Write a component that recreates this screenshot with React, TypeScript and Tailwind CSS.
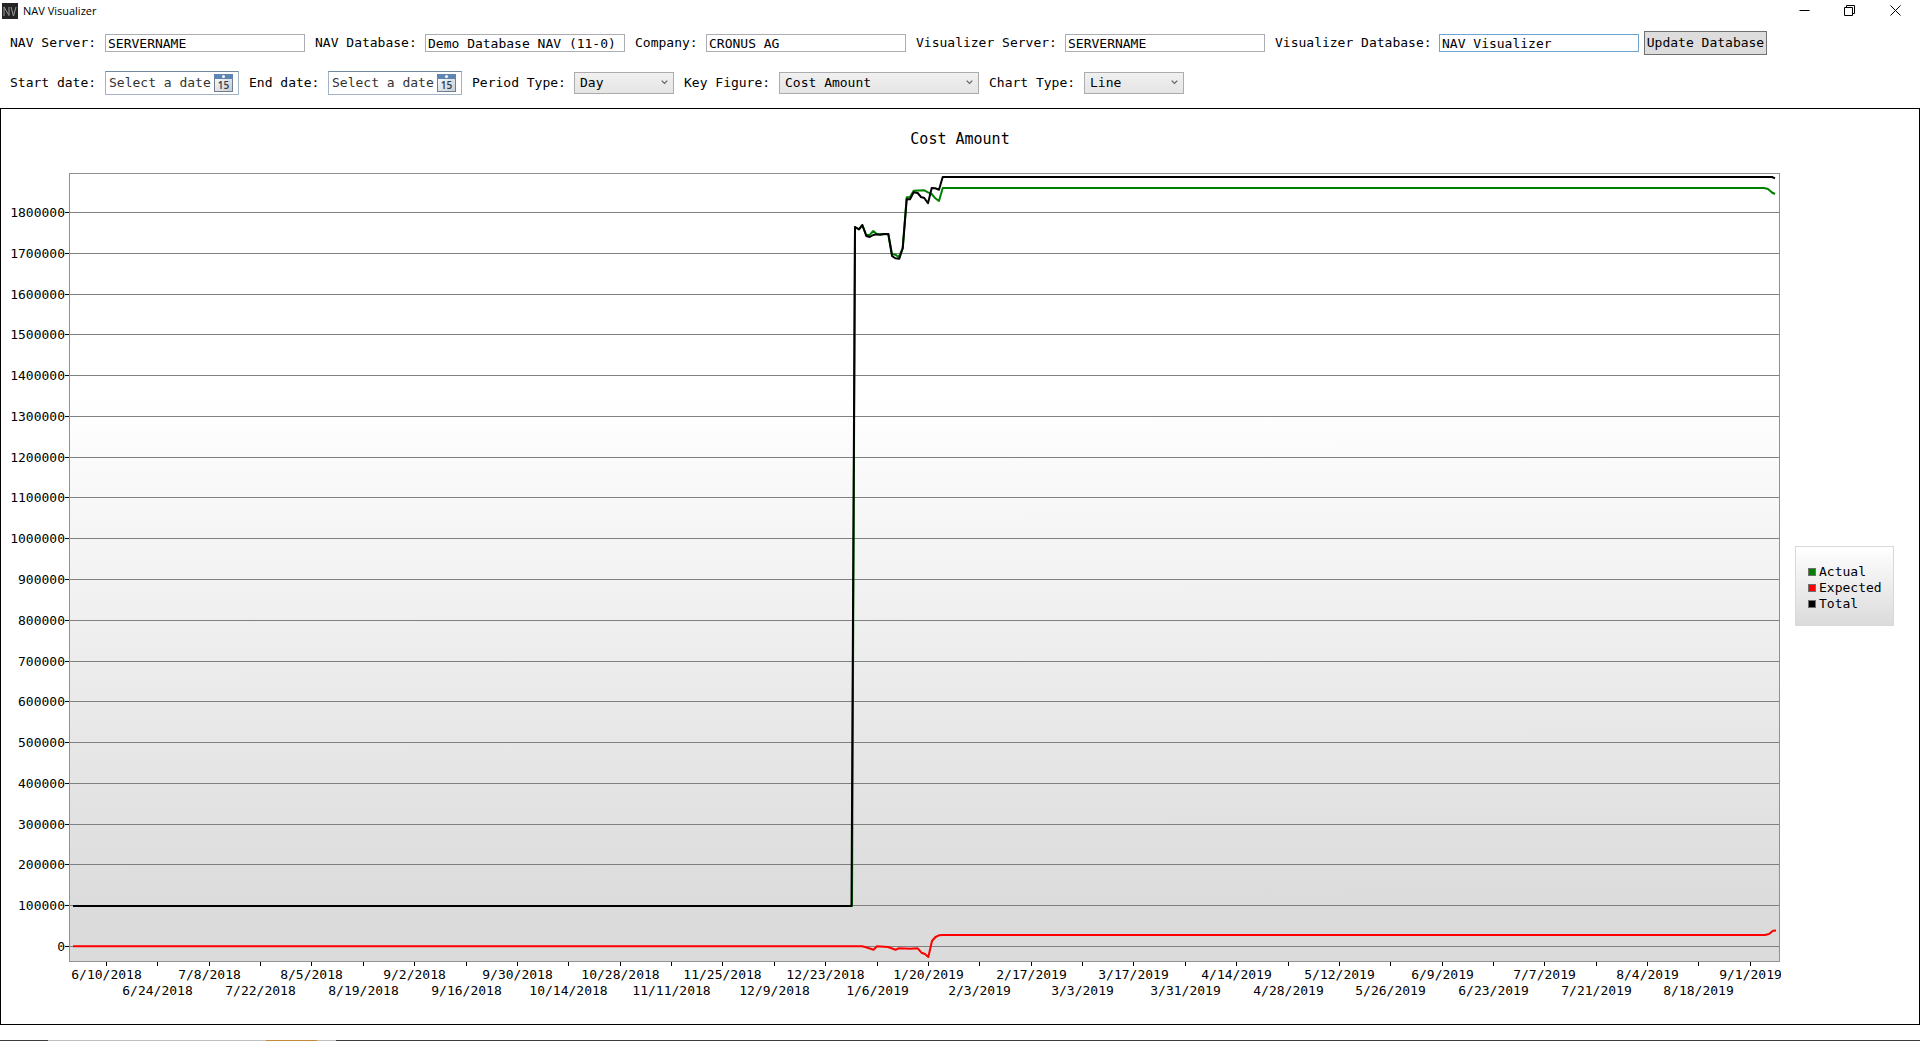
import React from "react";

type Point = [number, number];

const FIELDS = [
  { id: "nav-server", label: "NAV Server:", value: "SERVERNAME", labelWidth: "w-[95px]", border: "border-[#abadb3]" },
  { id: "nav-database", label: "NAV Database:", value: "Demo Database NAV (11-0)", labelWidth: "w-[110px]", border: "border-[#abadb3]" },
  { id: "company", label: "Company:", value: "CRONUS AG", labelWidth: "w-[71px]", border: "border-[#abadb3]" },
  { id: "vis-server", label: "Visualizer Server:", value: "SERVERNAME", labelWidth: "w-[149px]", border: "border-[#abadb3]" },
  { id: "vis-database", label: "Visualizer Database:", value: "NAV Visualizer", labelWidth: "w-[164px]", border: "border-[#6fa3d0]" },
];

const DATES = [
  "6/10/2018", "6/24/2018", "7/8/2018", "7/22/2018", "8/5/2018", "8/19/2018", "9/2/2018", "9/16/2018",
  "9/30/2018", "10/14/2018", "10/28/2018", "11/11/2018", "11/25/2018", "12/9/2018", "12/23/2018", "1/6/2019",
  "1/20/2019", "2/3/2019", "2/17/2019", "3/3/2019", "3/17/2019", "3/31/2019", "4/14/2019", "4/28/2019",
  "5/12/2019", "5/26/2019", "6/9/2019", "6/23/2019", "7/7/2019", "7/21/2019", "8/4/2019", "8/18/2019", "9/1/2019",
];

const AMOUNTS = Array.from({ length: 19 }, (_, i) => i * 100000);

const ACTUAL: Point[] = [
  [73, 906], [852, 906], [855, 227], [859, 229.3], [862.3, 225], [866.3, 235], [869.7, 235], [873.3, 231], [877, 234.3],
  [888.3, 234], [892, 254], [895.3, 254.7], [898.7, 257], [902.7, 248.3], [906.7, 197.3], [910, 197], [913.7, 190.7],
  [924.3, 190.3], [928, 192.3], [931.7, 194], [935.3, 198.3], [939, 201], [942.7, 188], [1764, 188], [1768, 189],
  [1772, 192.5], [1775, 194],
];
const EXPECTED: Point[] = [
  [73, 946.3], [862, 946.3], [866, 947.3], [873.5, 949.7], [877, 946.3], [888, 947], [895.5, 949.7], [899, 948.3],
  [910, 948.7], [917.7, 948.3], [921.5, 952.7], [925, 954], [928.3, 957], [932, 941], [935.5, 937], [939, 935.3],
  [943, 935], [1765, 935], [1769, 934], [1773, 930.7], [1776, 930.5],
];
const TOTAL: Point[] = [
  [73, 906], [851.5, 906], [855, 227], [859, 229.3], [862.3, 225], [866.3, 236], [869.7, 237], [873.3, 235], [876.7, 234.3],
  [880, 234.7], [884, 234], [888.3, 234], [892, 256], [895.3, 258.3], [899.3, 258.7], [902.7, 248.3], [906.7, 199.3],
  [910, 199.3], [913.7, 192.3], [917.7, 193], [921, 197], [924.3, 198], [928, 203.3], [931.7, 188], [935.3, 188.3],
  [939, 189.7], [942.7, 177], [1772, 177], [1775, 178.3],
];

const toPoints = (points: Point[]) => points.map((p) => p.join(",")).join(" ");
const dateX = (i: number) => Math.round(106 + i * 51.37) + 0.5;
const amountY = (amount: number) => Math.round(946 - (amount / 100000) * 40.78) + 0.5;

function TitleBar() {
  return (
    <header className="flex h-[31px] items-start justify-between">
      <div className="flex items-center gap-[5px] pt-[3px] pl-[2px]">
        <svg className="size-4" viewBox="0 0 16 16" fill="none" aria-hidden="true">
          <rect width="16" height="16" fill="#252525" />
          <path d="M2 13V4l5 8.500V4M9 4l2.500 9L14 4" stroke="#9a9a9a" />
        </svg>
        <h1 className="font-['Open_Sans',sans-serif] text-[11px] leading-4">NAV Visualizer</h1>
      </div>
      <div className="flex pr-[2px]">
        <button type="button" aria-label="Minimize" className="flex h-[21px] w-[46px] items-center justify-center">
          <svg className="size-[11px]" viewBox="0 0 11 11"><path d="M.5 5.500h10" stroke="#000" /></svg>
        </button>
        <button type="button" aria-label="Restore" className="flex h-[21px] w-[45px] items-center justify-center">
          <svg className="size-[11px]" viewBox="0 0 11 11" fill="none" stroke="#000"><path d="M.5 2.500h8v8h-8zM2.500 2.500v-2h8v8h-2" /></svg>
        </button>
        <button type="button" aria-label="Close" className="flex h-[21px] w-[46px] items-center justify-center">
          <svg className="size-[11px]" viewBox="0 0 11 11" stroke="#000"><path d="M.5.5l10 10M10.500.5l-10 10" /></svg>
        </button>
      </div>
    </header>
  );
}

function DateField({ id }: { id: string }) {
  return (
    <div className="flex h-6 w-[134px] items-center border border-[#a3b3c6] border-t-[#7389a0] bg-white pr-[5px] pl-[3px]">
      <input id={id} placeholder="Select a date" className="min-w-0 flex-1 bg-transparent outline-none placeholder:text-[#333]" />
      <button type="button" aria-label="Open calendar">
        <svg className="h-[18px] w-[19px]" viewBox="0 0 19 18">
          <defs>
            <linearGradient id={`${id}-page`} x1="0" y1="0" x2="1" y2="1">
              <stop offset="0" stopColor="#fff" />
              <stop offset="1" stopColor="#c4ccd6" />
            </linearGradient>
          </defs>
          <rect x=".5" y=".5" width="18" height="17" fill={`url(#${id}-page)`} stroke="#6f7d8c" />
          <rect width="19" height="5" fill="#5f86b3" />
          <circle cx="9.5" cy="2.5" r="1.500" fill="#fff" />
          <text x="9.5" y="15" textAnchor="middle" fontSize="10" fill="#2f3b48" className="font-['Open_Sans',sans-serif] font-semibold">15</text>
        </svg>
      </button>
    </div>
  );
}

function Select({ id, value, width }: { id: string; value: string; width: string }) {
  return (
    <div className={`grid h-[22px] items-center ${width}`}>
      <select id={id} defaultValue={value} className="col-start-1 row-start-1 h-[22px] w-full appearance-none border border-[#acacac] bg-linear-to-b from-[#f0f0f0] to-[#e5e5e5] pl-[5px]">
        <option>{value}</option>
      </select>
      <svg className="pointer-events-none col-start-1 row-start-1 mr-[6px] mb-[2px] h-[5px] w-[7px] justify-self-end" viewBox="0 0 7 5" fill="none">
        <path d="M.7.7l2.800 2.800L6.300.7" stroke="#606060" strokeWidth="1.200" />
      </svg>
    </div>
  );
}

function CostChart() {
  return (
    <svg className="h-auto min-w-0 flex-1" viewBox="1 150 1780 874" role="img" aria-label="Cost Amount by day">
      <defs>
        <linearGradient id="plot" x1="0.458" y1="0.28" x2="0.46" y2="0.94">
          <stop offset="0" stopColor="#fff" />
          <stop offset="1" stopColor="#dbdbdb" />
        </linearGradient>
      </defs>
      <rect x="69.5" y="173.5" width="1710" height="788" fill="url(#plot)" stroke="#919191" />
      {AMOUNTS.map((amount) => (
        <g key={amount}>
          <path d={`M70 ${amountY(amount)}H1779`} stroke="#808080" />
          <path d={`M65 ${amountY(amount)}H69`} stroke="#000" />
          <text x="65" y={amountY(amount) + 4.5} textAnchor="end" fontSize="13">{amount}</text>
        </g>
      ))}
      {DATES.map((date, i) => (
        <g key={date}>
          <path d={`M${dateX(i)} 962v4`} stroke="#000" />
          <text x={dateX(i)} y={i % 2 ? 995 : 979} textAnchor="middle" fontSize="13">{date}</text>
        </g>
      ))}
      <g fill="none" strokeWidth="2" strokeLinejoin="round">
        <polyline points={toPoints(ACTUAL)} stroke="#008000" />
        <polyline points={toPoints(EXPECTED)} stroke="#f00" />
        <polyline points={toPoints(TOTAL)} stroke="#000" />
      </g>
    </svg>
  );
}

const LEGEND = [
  { name: "Actual", color: "bg-[#008000]" },
  { name: "Expected", color: "bg-[#f00]" },
  { name: "Total", color: "bg-black" },
];

export default function App() {
  return (
    <main className="bg-white font-['DejaVu_Sans_Mono',monospace] text-[13px] leading-4 text-black">
      <TitleBar />
      <form onSubmit={(e) => e.preventDefault()}>
        <div className="flex h-6 items-center pl-[10px]">
          {FIELDS.map((f) => (
            <div key={f.id} className="mr-[10px] flex items-center last-of-type:mr-[5px]">
              <label htmlFor={f.id} className={`whitespace-nowrap ${f.labelWidth}`}>{f.label}</label>
              <input id={f.id} defaultValue={f.value} className={`h-[18px] w-[200px] border bg-white px-[2px] outline-none ${f.border}`} />
            </div>
          ))}
          <button type="submit" className="flex h-6 w-[123px] items-center justify-center border border-[#707070] bg-[#dddddd] whitespace-nowrap">Update Database</button>
        </div>
        <div className="mt-4 flex h-6 items-center pl-[10px]">
          <label htmlFor="start" className="w-[95px]">Start date:</label>
          <DateField id="start" />
          <label htmlFor="end" className="ml-[10px] w-[79px]">End date:</label>
          <DateField id="end" />
          <label htmlFor="period" className="ml-[10px] w-[102px]">Period Type:</label>
          <Select id="period" value="Day" width="w-[100px]" />
          <label htmlFor="figure" className="ml-[10px] w-[95px]">Key Figure:</label>
          <Select id="figure" value="Cost Amount" width="w-[200px]" />
          <label htmlFor="type" className="ml-[10px] w-[95px]">Chart Type:</label>
          <Select id="type" value="Line" width="w-[100px]" />
        </div>
      </form>
      <section className="mt-[13px] mb-[15px] border border-black pt-[22px]">
        <h2 className="mb-[3px] text-center text-[15px] leading-4">Cost Amount</h2>
        <div className="flex items-center">
          <CostChart />
          <ul className="mr-[25px] mb-[2px] ml-[14px] flex h-20 w-[99px] flex-col justify-center border border-[#d8d8d8] bg-linear-to-b from-white to-[#dbdbdb] pt-1 pl-3">
            {LEGEND.map((l) => (
              <li key={l.name} className="flex items-center gap-[3px]">
                <span className={`size-2 border border-[#707070] ${l.color}`} />
                {l.name}
              </li>
            ))}
          </ul>
        </div>
      </section>
      <footer className="flex h-px bg-[#3c3c40]">
        <div className="ml-12 w-[218px] bg-[#bdbdbd]" />
        <div className="w-[51px] bg-[#c08a3a]" />
        <div className="w-[19px] bg-[#bdbdbd]" />
      </footer>
    </main>
  );
}
